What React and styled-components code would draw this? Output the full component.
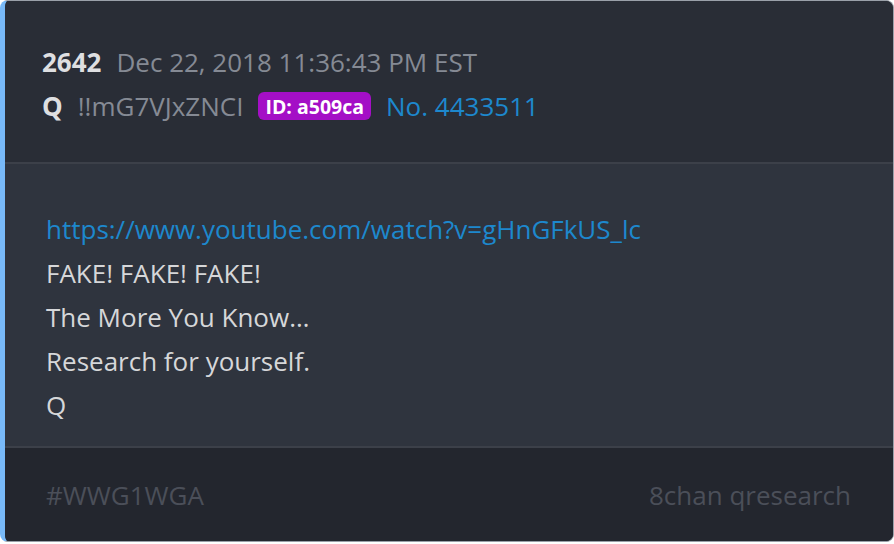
import React from 'react';
import styled, { createGlobalStyle } from 'styled-components';

const GlobalStyle = createGlobalStyle`
  html, body {
    margin: 0;
    padding: 0;
    background: #ffffff;
  }
  body {
    font-family: 'Open Sans', 'Noto Sans', sans-serif;
  }
`;

const post = {
  number: '2642',
  date: 'Dec 22, 2018 11:36:43 PM EST',
  name: 'Q',
  trip: '!!mG7VJxZNCI',
  id: 'a509ca',
  no: '4433511',
  link: 'https://www.youtube.com/watch?v=gHnGFkUS_lc',
  lines: ['FAKE! FAKE! FAKE!', 'The More You Know…', 'Research for yourself.', 'Q'],
  tag: '#WWG1WGA',
  source: '8chan qresearch',
};

const App = () => (
  <>
    <GlobalStyle />
    <Card>
      <Header>
        <MetaRow>
          <Strong>{post.number}</Strong>
          <Muted>{post.date}</Muted>
        </MetaRow>
        <MetaRow>
          <Strong>{post.name}</Strong>
          <Muted>{post.trip}</Muted>
          <Badge>ID: {post.id}</Badge>
          <Blue>No. {post.no}</Blue>
        </MetaRow>
      </Header>
      <Body>
        <Line as="a" href="#" $link>
          {post.link}
        </Line>
        {post.lines.map((l, i) => (
          <Line key={i}>{l}</Line>
        ))}
      </Body>
      <Footer>
        <FootText>{post.tag}</FootText>
        <FootText>{post.source}</FootText>
      </Footer>
    </Card>
  </>
);

export default App;

const Card = styled.article`
  box-sizing: border-box;
  width: 894px;
  height: 542px;
  display: flex;
  flex-direction: column;
  border: 1px solid #9aa0a9;
  border-left: 5px solid #78b9f8;
  border-radius: 8px;
  overflow: hidden;
  background: #23262e;
`;

const Header = styled.header`
  background: #292d36;
  padding: 39px 37px 34px;
  border-bottom: 2px solid #3c4049;
`;

const MetaRow = styled.div`
  display: flex;
  align-items: center;
  gap: 0 15px;
  height: 44px;
  font-size: 26px;
`;

const Strong = styled.span`
  font-weight: 700;
  color: #dedfe1;
`;

const Muted = styled.span`
  color: #858a94;
`;

const Blue = styled.span`
  color: #1d88cd;
`;

const Badge = styled.span`
  display: inline-flex;
  align-items: center;
  height: 28px;
  padding: 0 7px;
  border-radius: 6px;
  background: #a40fc6;
  color: #ffffff;
  font-size: 19.5px;
  font-weight: 700;
`;

const Body = styled.section`
  background: #2f343e;
  padding: 43px 41px 19px;
  border-bottom: 2px solid #3c4049;
  display: flex;
  flex-direction: column;
`;

const Line = styled.div`
  font-size: 26px;
  line-height: 44px;
  color: ${({ $link }) => ($link ? '#1d88cd' : '#d6d7d9')};
  text-decoration: none;
`;

const Footer = styled.footer`
  flex: 1;
  display: flex;
  justify-content: space-between;
  align-items: center;
  padding: 0 42px 0 41px;
  background: #23262e;
`;

const FootText = styled.span`
  font-size: 26px;
  color: #4b4f59;
`;
